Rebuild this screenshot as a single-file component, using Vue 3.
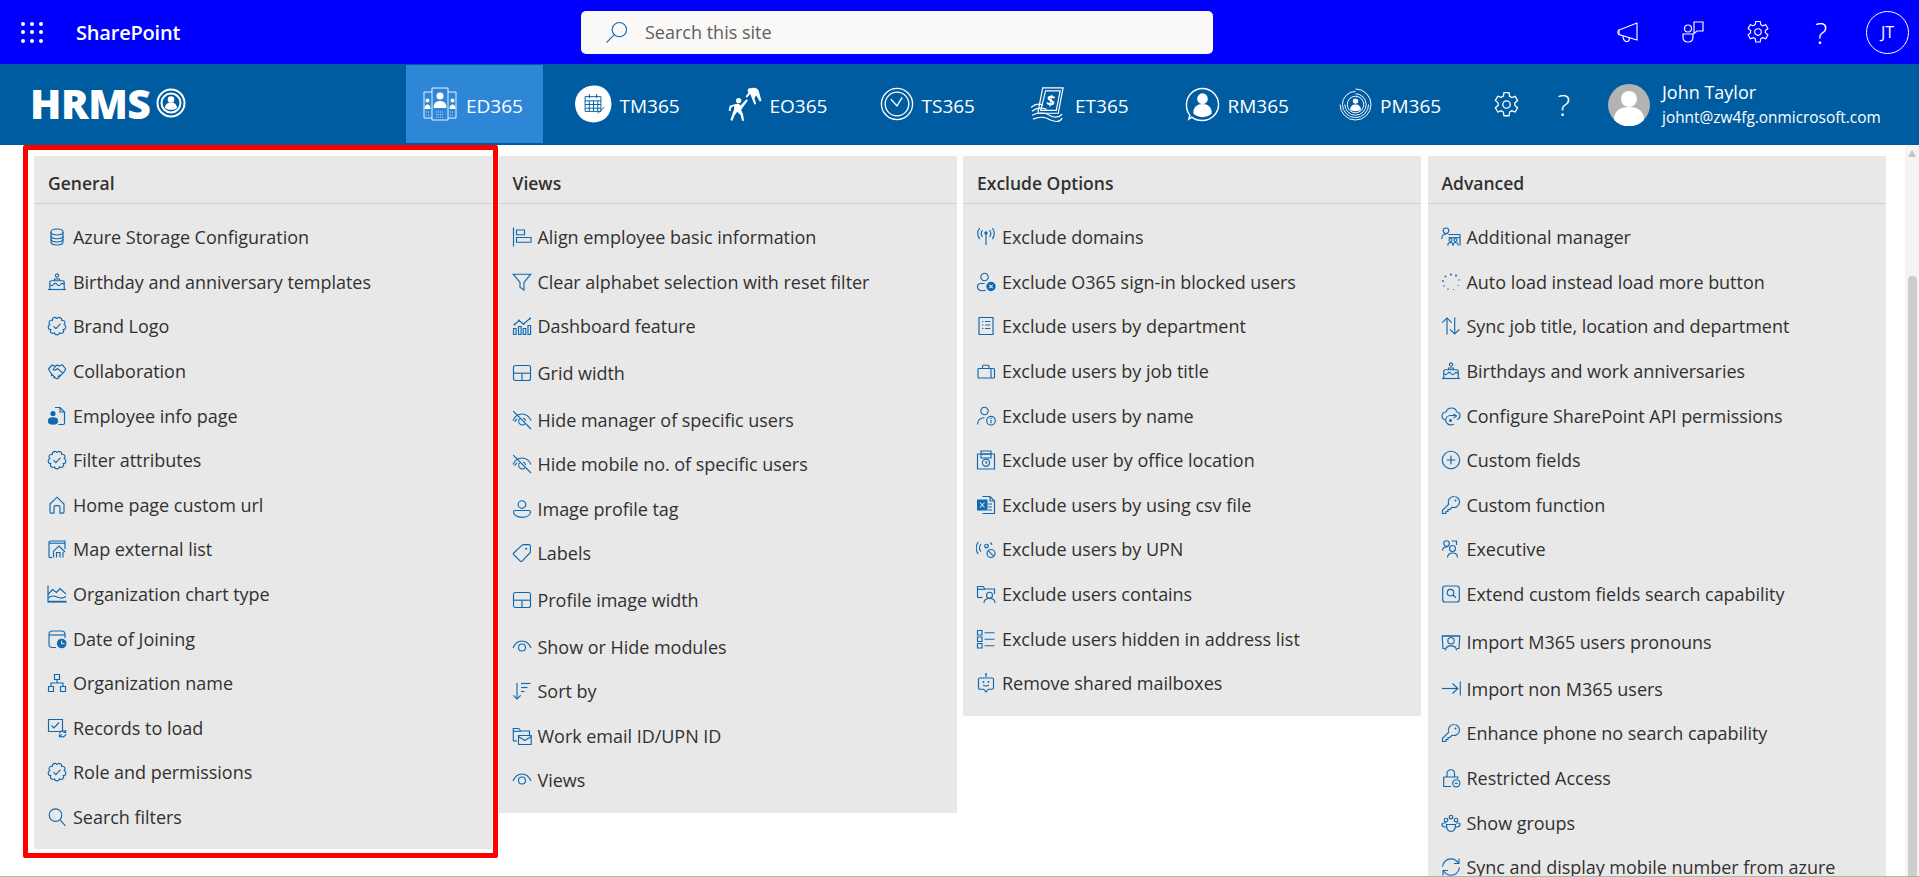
<script setup>
import { h } from 'vue'

// little helpers for icon shapes
const ring = (x, y, r) => `M${x - r} ${y}a${r} ${r} 0 1 0 ${r * 2} 0a${r} ${r} 0 1 0 ${-r * 2} 0z`

const scallop = (() => {
  const n = 9
  let d = ''
  for (let i = 0; i <= n; i++) {
    const a = (i / n) * Math.PI * 2 - Math.PI / 2
    const x = (10 + 7.3 * Math.cos(a)).toFixed(2)
    const y = (10 + 7.3 * Math.sin(a)).toFixed(2)
    d += i === 0 ? `M${x} ${y}` : `A2.55 2.55 0 0 1 ${x} ${y}`
  }
  return d
})()

const spinnerDots = [
  [10, 2.5, 1.1], [15, 3.5, 1.1], [18, 8, 0.7], [17, 13.5, 0.6], [12.5, 17.5, 0.6],
  [7, 17, 0.7], [3, 14, 0.8], [2, 9, 0.9], [4.5, 4.5, 1]
].map(([x, y, r]) => ring(x, y, r))

const icons = {
  db: { s: ['M4 5c0-1.7 2.7-3 6-3s6 1.3 6 3-2.7 3-6 3-6-1.3-6-3z', 'M4 5v10c0 1.7 2.7 3 6 3s6-1.3 6-3V5', 'M4 8.7c0 1.7 2.7 3 6 3s6-1.3 6-3', 'M4 12c0 1.7 2.7 3 6 3s6-1.3 6-3'] },
  cake: { s: ['M1 17.5h18', 'M2.8 17.5V10c0-.8.5-1.3 1.3-1.3h11.8c.8 0 1.3.5 1.3 1.3v7.5', 'M3 12.5c1.2 1.5 2.4 1.5 3.5 0s2.3-1.5 3.5 0 2.3 1.5 3.5 0 2.3-1.5 3.5 0', ring(10, 3.5, 1.6), 'M7.5 8.7V7h5v1.7'] },
  badge: { s: [scallop, 'M6.5 10.2l2.4 2.4 4.6-5'] },
  hands: { s: ['M1.5 8 5 4l3.2 1.3 2-1.3 2 1 3-1.2L18.7 8l-2 3.5-5.5 5.5c-1 1-2.2.8-2.7 0L3.8 12z', 'M8.5 5.5 6 8.5c.8 1 2 1 3 .2l1.6-1.2 5 4.6', 'M5.5 13.3 4 15M8 15.5l-1.5 1.7M13 14l-2 2'] },
  docuser: { s: ['M8 1.5h5l4.5 4.5v11c0 .8-.6 1.5-1.5 1.5h-4.5', 'M13 1.5V6h4.5'], f: [ring(6, 7.5, 2.6), 'M1 14.5c0-2 1.5-3.2 5-3.2s5 1.2 5 3.2V16c0 1.6-2.2 2.8-5 2.8S1 17.6 1 16z'] },
  home: { s: ['M3 9 10 2.2 17 9v7.8c0 .8-.6 1.4-1.4 1.4H13v-5.8c0-1-.8-1.8-1.7-1.8H8.7c-1 0-1.7.8-1.7 1.8v5.8H4.4c-.8 0-1.4-.6-1.4-1.4z'] },
  maplist: { s: ['M2 18.5V3.5C2 2.7 2.7 2 3.5 2H18v8', 'M2 18.5h3', 'M2 4.2h16', 'M6.5 18.5v-6.3L12 7l6 6', 'M9.5 18.5v-5h3.5v5', 'M16 13v5.5'] },
  area: { s: ['M1 1.5v17', 'M1 10.5l4.5-5 4 3 3.5-4 6 5.5', 'M1 14c3-2.5 6-2.5 9-1s6 1.5 9-.5'], f: ['M1 16.8h18.5v1.8H1z'] },
  calclock: { s: ['M2 11V5.5C2 3.5 3.5 2 5.5 2h9c2 0 3.5 1.5 3.5 3.5V9', 'M2 6h16', 'M2 11v4c0 2 1.5 3.5 3.5 3.5H9'], f: [ring(14.7, 14.5, 4.8)], l: ['M14.7 11.8v3h2.8'] },
  org: { s: ['M7.5 1.5h5v5h-5z', 'M1.5 13.5h5v5h-5z', 'M13.5 13.5h5v5h-5z', 'M10 6.5V10M4 13.5V10h12v3.5'] },
  records: { s: ['M1.5 1.5h14v12h-14z', 'M4.5 7.5 7 10l5-5.5', 'M12.5 15.5a3.3 3.3 0 0 1 5.5-1.8l.6.8', 'M18.8 16a3.3 3.3 0 0 1-5.5 2l-.7-.8', 'M18.7 12v2.5h-2.3M12.5 19.5V17h2.3'] },
  search: { s: ['M8.5 1.8a6.3 6.3 0 1 1 0 12.6 6.3 6.3 0 0 1 0-12.6z', 'M13.2 13.2 18.5 18.8'] },
  align: { s: ['M1.5.5v19', 'M4.5 3h8v4.7h-8z', 'M4.5 10.5h14.5v4.7H4.5z'] },
  filter: { s: ['M1.3 2.2h17.4l-6.7 8.2v7.8l-4-3v-4.8z'] },
  dash: { s: ['M1.5 12.5h2.6v6H1.5z', 'M6.5 10.5h2.6v8H6.5z', 'M11.2 12.5h2.6v6h-2.6z', 'M16 9.5h2.6v9H16z', 'M2.5 8.5 7 4.5l4.5 3.5 6.5-5.5'], f: [ring(2.5, 8.5, 1), ring(7, 4.5, 1), ring(11.5, 8, 1), ring(18, 2.5, 1)] },
  grid: { s: ['M3.5 2.5h13c1.2 0 2 .8 2 2v11c0 1.2-.8 2-2 2h-13c-1.2 0-2-.8-2-2v-11c0-1.2.8-2 2-2z', 'M1.5 10.2h17', 'M10 10.2v7.3'] },
  eyeoff: { s: ['M1 10.5C3 6 6.3 4 10 4s7 2 9 6.5', 'M7.7 8.8a3.6 3.6 0 0 0 5.2 5', 'M1.2 1.2 19 19', 'M11 8a3.6 3.6 0 0 1 2.6 3', 'M5 8.8c-1 1-1.8 2-2.3 3'] },
  person: { s: [ring(10, 5.5, 3.8), 'M1.5 13c0-1 .7-1.5 1.5-1.5h14c.8 0 1.5.5 1.5 1.5 0 3.2-3.5 5.3-8.5 5.3S1.5 16.2 1.5 13z'] },
  tag: { s: ['M1.6 10 10.2 2.2c.4-.4.7-.6 1.4-.6h5.2c.9 0 1.6.7 1.6 1.6v5.4c0 .6-.2 1-.6 1.4l-7.7 8.1c-.5.5-1.3.5-1.8 0l-6.7-6.6c-.5-.5-.5-1 0-1.5z'], f: [ring(14.2, 5.8, 1)] },
  eye: { s: ['M1 11C3 6.3 6.3 4 10 4s7 2.3 9 7', ring(10, 10.5, 3.5)] },
  sort: { s: ['M5 2v16', 'M1.3 14.3 5 18l3.7-3.7', 'M9 2.5h9.5', 'M9 6.5h6.5', 'M9 10.5h3.5'] },
  workmail: { s: ['M1.3 15V2.5h5.5l2 2.5h8.7v4', 'M1.3 15H5', 'M1.3 5.3h7.5', 'M6.5 9.5h12.7v9H6.5z', 'M6.5 10.5l6.3 4 6.4-4'] },
  antenna: { s: ['M10 7v11', 'M6.5 3c-1.6 2.2-1.6 5 0 7', 'M3.7 1c-2.6 3.2-2.6 8 0 11', 'M13.5 3c1.6 2.2 1.6 5 0 7', 'M16.3 1c2.6 3.2 2.6 8 0 11'], f: [ring(10, 6, 1.7)] },
  blocked: { s: [ring(8.5, 5, 3.7), 'M8.5 11.5H5c-2.2 0-3.5 1.2-3.5 3.2 0 2.3 2 4 5 4 1.3 0 2.3-.2 3-.5'], f: [ring(15, 14.5, 4.7)], l: ['M13.3 12.8l3.4 3.4M16.7 12.8l-3.4 3.4'] },
  dept: { s: ['M3 1.5h14v17H3z', 'M6 5.5h1.3M9 5.5h5.3M6 9h1.3M9 9h5.3M6 12.5h1.3M9 12.5h5.3'] },
  brief: { s: ['M3 7.5h14.5c.6 0 1 .4 1 1V16c0 .6-.4 1-1 1H3c-.6 0-1-.4-1-1V8.5c0-.6.4-1 1-1z', 'M6.5 7.5V5.2c0-.7.4-1 1-1h4.5c.6 0 1 .3 1 1v2.3', 'M15 7.5V17'] },
  byname: { s: [ring(8.5, 5, 3.7), 'M1.5 18.5c0-4.5 3-6.8 7-6.8', ring(15, 14.7, 4.3), 'M15 14v3.2'], f: [ring(15, 12.5, .7)] },
  office: { s: ['M1.5 4h17v15h-17z', 'M5 1h10v7H5z', 'M5 4h10', ring(10, 12.7, 3.6), 'M10 11v2h1.5'] },
  excel: { s: ['M6.5 1.5H14l4.5 4.5v12.5H6.5', 'M14 1.5V6h4.5', 'M12 9h4M12 12h4M12 15h4'], f: ['M1 4.5h10.5v11H1z'], l: ['M4 7.5l4.5 5M8.5 7.5l-4.5 5'] },
  upn: { s: ['M5 5c-1.8 2.2-1.8 5.5 0 7.7', 'M2.3 3c-2.8 3.3-2.8 8.7 0 12', ring(10.5, 7, 1.8), 'M14.5 3.5c.7.8 1.2 1.5 1.4 2.5', ring(15, 14.5, 4), 'M12.2 11.7l5.6 5.6'] },
  foldperson: { s: ['M1.5 13.5V2.5H7L9 5h9.5v5', 'M1.5 13.5h5', 'M1.5 5.3h7.5', ring(13.5, 11.2, 3), 'M8 19c0-2.7 2.3-4.5 5.5-4.5S19 16.3 19 19'] },
  addr: { s: ['M1.5 1.5h4.5V6H1.5z', 'M1.5 8h4.5v4.5H1.5z', 'M1.5 14.5h4.5V19H1.5z', 'M8.5 3.7h10M8.5 10.2h10M8.5 16.7h10'] },
  bot: { s: ['M10 1v3', 'M4 5h12c.8 0 1.5.7 1.5 1.5v8.2c0 .8-.7 1.5-1.5 1.5h-3.7L10 19l-2.3-2.8H4c-.8 0-1.5-.7-1.5-1.5V6.5C2.5 5.7 3.2 5 4 5z', 'M7.3 12c1.4 1.1 4 1.1 5.4 0'], f: [ring(7.5, 9, .9), ring(12.5, 9, .9), ring(10, 1, .9)] },
  addmgr: { s: [ring(5, 3.8, 2.8), 'M.8 12c0-3 1.7-5 4.2-5', 'M7.5 7.5h11.5v11', 'M7.5 10.7h11.5', ring(9.5, 13, 1.5), ring(14.5, 13, 1.5), 'M6.8 18.5c0-2 1-3 2.7-3s2.7 1 2.7 3', 'M11.8 18.5c0-2 1-3 2.7-3s2.7 1 2.7 3'] },
  spinner: { f: spinnerDots },
  updown: { s: ['M6 18.5V2', 'M1.3 6.7 6 2l4.7 4.7', 'M13.7 1.5V18', 'M9 13.3l4.7 4.7 4.7-4.7'] },
  cloud: { s: ['M4.5 14C2.3 13.4 1 11.8 1 10c0-2.3 1.7-3.8 4-4 1-2.7 3-4 5.5-4 2.7 0 4.7 1.6 5.2 4 1.8.2 3.3 1.8 3.3 3.7 0 2-1.5 3.3-3 3.8', 'M13 18.3c-1 .4-2 .6-3 .6-3 0-5.3-2.2-5.3-4.7 0-2.6 2-4.7 5-4.7H15', 'M12.5 8l3 2-3 2'], f: [ring(9.5, 14.5, 1.5)] },
  plus: { s: [ring(10, 10, 8.7), 'M10 5.7v8.6M5.7 10h8.6'] },
  key: { s: ['M13 1.5a5.5 5.5 0 1 1-1.8 10.7L9 14.5H7v2H5v2H1.5v-3.2L7.8 9.2A5.5 5.5 0 0 1 13 1.5z'], f: [ring(14.5, 5.5, 1)] },
  exec: { s: [ring(5.5, 4.5, 2.8), 'M1.5 11.5c0-2 1.7-3.5 4-3.5h.8', ring(11.5, 9.5, 3), 'M6.5 18.5c0-2.7 2-4.5 5-4.5s5 1.8 5 4.5', 'M10.5 2h5v4'] },
  boxsearch: { s: ['M4 2h12c1.3 0 2.3 1 2.3 2.3v11.4c0 1.3-1 2.3-2.3 2.3H4c-1.3 0-2.3-1-2.3-2.3V4.3C1.7 3 2.7 2 4 2z', ring(9.5, 8.7, 3.3), 'M12 11l3 2.7'] },
  pronoun: { s: ['M4 16.5H2L1.2 4h17.6L18 16.5h-2', 'M1.2 4h17.6', ring(10, 8.7, 3.2), 'M4.5 18.5c0-3 2.3-4.7 5.5-4.7s5.5 1.7 5.5 4.7'] },
  importto: { s: ['M.8 9.5h16', 'M11.5 4.5l5.3 5-5.3 5', 'M19.3 2.5v14'] },
  lock: { s: ['M6 9V5.5C6 3.3 7.5 1.7 9.7 1.7s3.8 1.6 3.8 3.8V9', 'M2.7 9h14v2', 'M2.7 9v9.5H10', ring(15.3, 15.3, 3.6), 'M13.8 15.3h3'] },
  groups: { s: [ring(5, 7, 1.8), ring(10, 4, 1.8), ring(15, 7, 1.8), 'M5.5 11.5h9c0 4.5-1.7 7-4.5 7s-4.5-2.5-4.5-7z', 'M5.5 14H4c-1.7 0-3-1.3-3-2.7 0-.8.5-1.3 1.3-1.3H5', 'M14.5 14H16c1.7 0 3-1.3 3-2.7 0-.8-.5-1.3-1.3-1.3H15'] },
  sync: { s: ['M1.5 9.5C2.5 5 5.7 1.8 10 1.8c3.2 0 5.8 1.7 7.5 4.5', 'M18 1.5v5h-5', 'M18.5 10.5c-1 4.5-4.2 7.7-8.5 7.7-3.2 0-5.8-1.7-7.5-4.5', 'M2 18.5v-5h5'] },

  // white ones in the two bars
  megaphone: { vb: 24, s: ['M3 10 21 3v17L3 14.5z', 'M3 10c-1.5 1-1.5 3.5 0 4.5', 'M7 16c0 4 2 6 4.5 5.5 1.5-.4 2-1.5 1.8-3.5'] },
  feedback: { vb: 24, s: ['M13 2h9v9h-6l-3 2.5z', ring(7, 8.5, 3.5), 'M2 14h10v3c0 3-2 5-5 5s-5-2-5-5z'] },
  gear: { vb: 24, s: ['M9.8 1.5h4.4l.6 3.2 1.9 1.1 3-1.1 2.2 3.8-2.5 2.1v2.2l2.5 2.1-2.2 3.8-3-1.1-1.9 1.1-.6 3.3H9.8l-.6-3.3-1.9-1.1-3 1.1-2.2-3.8 2.5-2.1v-2.2L2.1 8.4l2.2-3.8 3 1.1 1.9-1.1z', ring(12, 12, 3.3)] },
  magnify: { vb: 24, s: ['M15 1.5a7.5 7.5 0 1 1 0 15 7.5 7.5 0 0 1 0-15z', 'M9.5 14.5 1.5 22.5'] },
  ed: { vb: 36, w: .9, s: ['M10 2h16v32H10z', 'M10 6H2v26h8', 'M26 6h8v26h-8'], f: [ring(18, 10, 3.6), 'M11.5 22c0-5 2.5-7 6.5-7s6.5 2 6.5 7z', ring(5.5, 14.5, 2), ring(30.5, 14.5, 2), 'M2.5 23c0-3 1-4.5 3-4.5S8.5 20 8.5 23z', 'M27.5 23c0-3 1-4.5 3-4.5s3 1.5 3 4.5z'], l2: ['M14 26h8M14 28.5h8M14 31h8', 'M4 26h4M4 29h4M28 26h4M28 29h4'] },
  tm: { vb: 36, w: 1, f: ['M18.5 .5c9.8-.3 17 6.5 17 17.5 0 10-7 17.5-17 17.5C8.5 35.500 1 28 1 18 1 8 8.5 .8 18.5 .5z'], blue: ['M10.5 11h15v14h-15z', 'M10.5 15h15', 'M14.5 8.500v4M21.5 8.500v4', 'M14.5 15v10M18.5 15v10M22.5 15v10M10.5 18.500h15M10.5 22h15', 'M22.5 27l6-6'] },
  eo: { vb: 36, f: [ring(12, 14, 2.7), 'M9 17.5c2-.5 4 0 5 1.5l6-6.5 1.500 1.500-7 9.500 2 4.500 1 6.500-2 .4-1.500-6-3.500-3.500-2.500 3.500-2.700 6-1.800-1 2.500-7.500 1.300-3.500v-3.500l-3 2-.8 3.500-1.800-.5 1-5z', ring(24, 3.7, 2.7), 'M26 1c3-.6 5 .2 6.5 2.700l3 10.500-1.800.6L30 8.500l-1.800 3 1.800 6-1.800.5-3-7.500-1.200-3.500-3.500 4-1.500-1.300z'] },
  ts: { vb: 36, w: 1.4, s: [ring(18, 18, 16.5), ring(18, 18, 12.5), 'M11.5 13l6.5 7 5.5-9'] },
  et: { vb: 38, w: 1.2, s: ['M13 2h21l-5 26H8z', 'M16 5h15l-4 20H11z', 'M1 22c5-4 9-4 12-2', 'M2 26c5-4 10-4 15-2', 'M2 30c6-3 14-3 18 0 5 3 10 2 13-1', 'M3 34c7-3 14-2 18 1 5 2 10 2 12-2'], t: '$' },
  rm: { vb: 36, w: 1.5, s: ['M5 29C2.5 26 1.5 22 1.5 18 1.5 9 9 1.5 18 1.5S34.5 9 34.5 18 27 34.5 18 34.5c-4 0-8-1-11-3.5l-3 2 1-4z'], f: [ring(18, 12, 5.5), 'M8.5 27c0-6 3.5-9.5 9.5-9.5s9.5 3.5 9.5 9.5c-2 2.5-5.5 4-9.5 4s-7.5-1.5-9.5-4z'] },
  pm: { vb: 34, w: 1, s: ['M17 1a16 16 0 1 1-16 16', 'M17 3.5a13.5 13.5 0 1 0 13.5 13.5', 'M17 6a11 11 0 1 1-11 11', ring(17, 17, 8.5)], f: [ring(17, 13.5, 2.8), 'M11.5 22.5c0-3.5 2-5.5 5.5-5.5s5.5 2 5.5 5.5c-1.3 1-3.3 1.5-5.5 1.5s-4.2-.5-5.5-1.5z'] },
  logoperson: { vb: 30, w: 2, s: [ring(15, 15, 13.5), ring(15, 15, 9.5)], f: [ring(15, 11.5, 3.3), 'M9 20c0-3.5 2.5-5.5 6-5.5s6 2 6 5.5c-1.5 1.3-3.7 1.8-6 1.8s-4.5-.5-6-1.8z'] }
}

// props are name + size, colour comes from css
const Icon = (props) => {
  const ic = icons[props.name] || {}
  const vb = ic.vb || 20
  const sw = ic.w || 1.15
  const kids = []
  ;(ic.f || []).forEach(d => kids.push(h('path', { d, fill: 'currentColor' })))
  ;(ic.s || []).forEach(d => kids.push(h('path', { d, fill: 'none', stroke: 'currentColor', 'stroke-width': sw })))
  ;(ic.l || []).forEach(d => kids.push(h('path', { d, fill: 'none', stroke: '#e8e8e8', 'stroke-width': 1.1 })))
  ;(ic.l2 || []).forEach(d => kids.push(h('path', { d, fill: 'none', stroke: 'currentColor', 'stroke-width': .7, 'stroke-dasharray': '1 1' })))
  ;(ic.blue || []).forEach(d => kids.push(h('path', { d, fill: 'none', stroke: '#005ca0', 'stroke-width': .9 })))
  if (ic.t) kids.push(h('text', { x: 17, y: 20, 'font-size': 15, 'font-weight': 700, 'font-family': 'Open Sans, sans-serif', fill: 'currentColor', transform: 'rotate(10 20 15)' }, ic.t))
  return h('svg', { width: props.size || 20, height: props.size || 20, viewBox: `0 0 ${vb} ${vb}`, class: 'ic' }, kids)
}
Icon.props = ['name', 'size']

const tabs = [
  { name: 'ED365', icon: 'ed', size: 36, w: 137, active: true },
  { name: 'TM365', icon: 'tm', size: 38, w: 153 },
  { name: 'EO365', icon: 'eo', size: 35, w: 153 },
  { name: 'TS365', icon: 'ts', size: 34, w: 150.5 },
  { name: 'ET365', icon: 'et', size: 37, w: 154.5 },
  { name: 'RM365', icon: 'rm', size: 35, w: 154.5 },
  { name: 'PM365', icon: 'pm', size: 33, w: 154 }
]

const panels = [
  {
    title: 'General',
    items: [
      ['db', 'Azure Storage Configuration'], ['cake', 'Birthday and anniversary templates'], ['badge', 'Brand Logo'],
      ['hands', 'Collaboration'], ['docuser', 'Employee info page'], ['badge', 'Filter attributes'],
      ['home', 'Home page custom url'], ['maplist', 'Map external list'], ['area', 'Organization chart type'],
      ['calclock', 'Date of Joining'], ['org', 'Organization name'], ['records', 'Records to load'],
      ['badge', 'Role and permissions'], ['search', 'Search filters']
    ]
  },
  {
    title: 'Views',
    items: [
      ['align', 'Align employee basic information'], ['filter', 'Clear alphabet selection with reset filter'], ['dash', 'Dashboard feature'],
      ['grid', 'Grid width', 2], ['eyeoff', 'Hide manager of specific users', 2], ['eyeoff', 'Hide mobile no. of specific users'],
      ['person', 'Image profile tag'], ['tag', 'Labels'], ['grid', 'Profile image width', 2],
      ['eye', 'Show or Hide modules', 2], ['sort', 'Sort by'], ['workmail', 'Work email ID/UPN ID'], ['eye', 'Views']
    ]
  },
  {
    title: 'Exclude Options',
    items: [
      ['antenna', 'Exclude domains'], ['blocked', 'Exclude O365 sign-in blocked users'], ['dept', 'Exclude users by department'],
      ['brief', 'Exclude users by job title'], ['byname', 'Exclude users by name'], ['office', 'Exclude user by office location'],
      ['excel', 'Exclude users by using csv file'], ['upn', 'Exclude users by UPN'], ['foldperson', 'Exclude users contains'],
      ['addr', 'Exclude users hidden in address list'], ['bot', 'Remove shared mailboxes']
    ]
  },
  {
    title: 'Advanced',
    items: [
      ['addmgr', 'Additional manager'], ['spinner', 'Auto load instead load more button'], ['updown', 'Sync job title, location and department'],
      ['cake', 'Birthdays and work anniversaries'], ['cloud', 'Configure SharePoint API permissions'], ['plus', 'Custom fields'],
      ['key', 'Custom function'], ['exec', 'Executive'], ['boxsearch', 'Extend custom fields search capability'],
      ['pronoun', 'Import M365 users pronouns', 3], ['importto', 'Import non M365 users', 2], ['key', 'Enhance phone no search capability'],
      ['lock', 'Restricted Access'], ['groups', 'Show groups'], ['sync', 'Sync and display mobile number from azure']
    ]
  }
]
</script>

<template>
  <div class="page">
    <header class="suitebar">
      <div class="waffle"><i v-for="n in 9" :key="n"></i></div>
      <span class="brand">SharePoint</span>
      <div class="searchbox">
        <Icon name="magnify" :size="23" class="search-ic" />
        <span>Search this site</span>
      </div>
      <div class="suite-actions">
        <Icon name="megaphone" :size="24" />
        <Icon name="feedback" :size="24" />
        <Icon name="gear" :size="24" class="suite-gear" />
        <span class="qmark">?</span>
        <span class="me">JT</span>
      </div>
    </header>

    <nav class="appbar">
      <div class="logo">
        <span>HRMS</span>
        <Icon name="logoperson" :size="30" />
      </div>
      <div class="tabs">
        <a
          v-for="t in tabs"
          :key="t.name"
          :class="['tab', { active: t.active }]"
          :style="{ width: t.w + 'px' }"
        >
          <Icon :name="t.icon" :size="t.size" />
          <span>{{ t.name }}</span>
        </a>
      </div>
      <Icon name="gear" :size="27" class="app-gear" />
      <span class="app-q">?</span>
      <div class="avatar">
        <svg width="42" height="42" viewBox="0 0 42 42">
          <circle cx="21" cy="21" r="21" fill="#b3b3b3" />
          <circle cx="21" cy="15" r="8" fill="#fff" />
          <path d="M6 36c0-9 6-13 15-13s15 4 15 13a21 21 0 0 1-30 0z" fill="#fff" />
        </svg>
      </div>
      <div class="who">
        <div class="who-name">John Taylor</div>
        <div class="who-mail">johnt@zw4fg.onmicrosoft.com</div>
      </div>
    </nav>

    <main class="content">
      <div class="board">
        <section v-for="p in panels" :key="p.title" class="panel">
          <h3>{{ p.title }}</h3>
          <ul>
            <li v-for="it in p.items" :key="it[1]" :class="it[2] ? 'push' + it[2] : ''">
              <Icon :name="it[0]" />
              <span>{{ it[1] }}</span>
            </li>
          </ul>
        </section>
      </div>
      <div class="scrollbar">
        <b class="arrow"></b>
        <div class="thumb"></div>
      </div>
      <div class="highlight"></div>
    </main>
  </div>
</template>

<style>
html, body {
  margin: 0;
  overflow: hidden;
}
</style>

<style scoped>
.page {
  height: 877px;
  display: flex;
  flex-direction: column;
  overflow: hidden;
  box-sizing: border-box;
  border-bottom: 1px solid #a9b9a9;
  font-family: "Open Sans", "Liberation Sans", sans-serif;
  background: #fff;
}

.ic {
  flex: none;
  display: block;
}

/* top suite bar */
.suitebar {
  height: 64px;
  flex: none;
  background: #0000ff;
  color: #fff;
  display: flex;
  align-items: center;
  padding-left: 21px;
}
.waffle {
  width: 22px;
  display: grid;
  grid-template-columns: repeat(3, 4px);
  justify-content: space-between;
  row-gap: 4.5px;
}
.waffle i {
  width: 4px;
  height: 4px;
  border-radius: 50%;
  background: #fff;
}
.brand {
  margin-left: 33px;
  width: 505px;
  font-size: 20px;
  font-weight: 600;
  letter-spacing: -0.2px;
}
.searchbox {
  width: 632px;
  height: 43px;
  box-sizing: border-box;
  background: #faf9f8;
  border-radius: 5px;
  display: flex;
  align-items: center;
  padding-left: 24px;
  color: #605e5c;
  font-size: 18px;
}
.search-ic {
  color: #1069b0;
  margin-right: 17px;
}
.suite-actions {
  margin-left: auto;
  display: flex;
  align-items: center;
  padding-right: 10px;
}
.suite-actions .ic {
  margin-right: 41px;
}
.suite-actions .suite-gear {
  margin-right: 45px;
}
.qmark {
  font-size: 29px;
  line-height: 1;
  width: 14px;
  margin-right: 37px;
  font-weight: 300;
}
.me {
  width: 43px;
  height: 43px;
  box-sizing: border-box;
  border: 1px solid #fff;
  border-radius: 50%;
  display: flex;
  align-items: center;
  justify-content: center;
  font-size: 16px;
}

/* HRMS bar */
.appbar {
  height: 81px;
  flex: none;
  background: #005ca0;
  color: #fff;
  display: flex;
  align-items: center;
}
.logo {
  width: 406px;
  box-sizing: border-box;
  padding-left: 30px;
  margin-top: -4px;
  display: flex;
  align-items: center;
  font-size: 41px;
  font-weight: 800;
  letter-spacing: -0.5px;
}
.logo .ic {
  margin-left: 6px;
}
.tabs {
  display: flex;
  height: 78px;
  align-self: flex-start;
  margin-top: 1px;
}
.tab {
  flex: none;
  display: flex;
  align-items: center;
  gap: 8px;
  padding-left: 16px;
  box-sizing: border-box;
  font-size: 19px;
}
.tab span {
  margin-top: 3px;
}
.tab.active {
  background: #2e86d6;
  margin-right: 14.5px;
}
.app-gear {
  margin-left: 15.5px;
}
.app-q {
  margin-left: 38px;
  width: 14px;
  font-size: 30px;
  line-height: 1;
  font-weight: 300;
}
.avatar {
  margin-left: 36.5px;
  width: 42px;
  height: 42px;
}
.who {
  margin-left: 12px;
}
.who-name {
  font-size: 18px;
  line-height: 22px;
}
.who-mail {
  margin-top: 5px;
  font-size: 15.4px;
  line-height: 20px;
  white-space: nowrap;
}

/* settings panels */
.content {
  flex: 1;
  min-height: 0;
  display: flex;
  position: relative;
  overflow: hidden;
}
.board {
  flex: 1;
  display: grid;
  grid-template-columns: repeat(4, 458px);
  column-gap: 6.5px;
  align-items: start;
  padding: 11px 0 0 34px;
}
.panel {
  background: #e8e8e8;
  padding-bottom: 10px;
  color: #323130;
}
.panel h3 {
  margin: 0;
  height: 48px;
  box-sizing: border-box;
  padding-left: 14px;
  border-bottom: 1px solid #cfcfcf;
  font-size: 17.5px;
  font-weight: 600;
  line-height: 54px;
}
.panel ul {
  list-style: none;
  margin: 0;
  padding: 11px 0 0 13px;
}
.panel li {
  height: 44.6px;
  display: flex;
  align-items: center;
  gap: 6px;
  font-size: 18px;
  letter-spacing: -0.03px;
  white-space: nowrap;
}
.panel li .ic {
  color: #1069b0;
}
.push2 {
  margin-top: 2px;
}
.push3 {
  margin-top: 3.5px;
}

.scrollbar {
  flex: none;
  width: 14px;
  background: #f5f3f3;
  position: relative;
}
.arrow {
  position: absolute;
  left: 3px;
  top: 5px;
  border-left: 4px solid transparent;
  border-right: 4px solid transparent;
  border-bottom: 7px solid #c4c4c4;
}
.thumb {
  position: absolute;
  left: 3px;
  top: 131px;
  bottom: 0;
  width: 9px;
  background: #cdcdcd;
  border-radius: 4px 4px 0 0;
}

/* red annotation drawn over the first panel */
.highlight {
  position: absolute;
  left: 23px;
  top: 0;
  width: 475px;
  height: 713px;
  box-sizing: border-box;
  border: 5px solid #ff0000;
  border-radius: 2px;
  pointer-events: none;
}
</style>
